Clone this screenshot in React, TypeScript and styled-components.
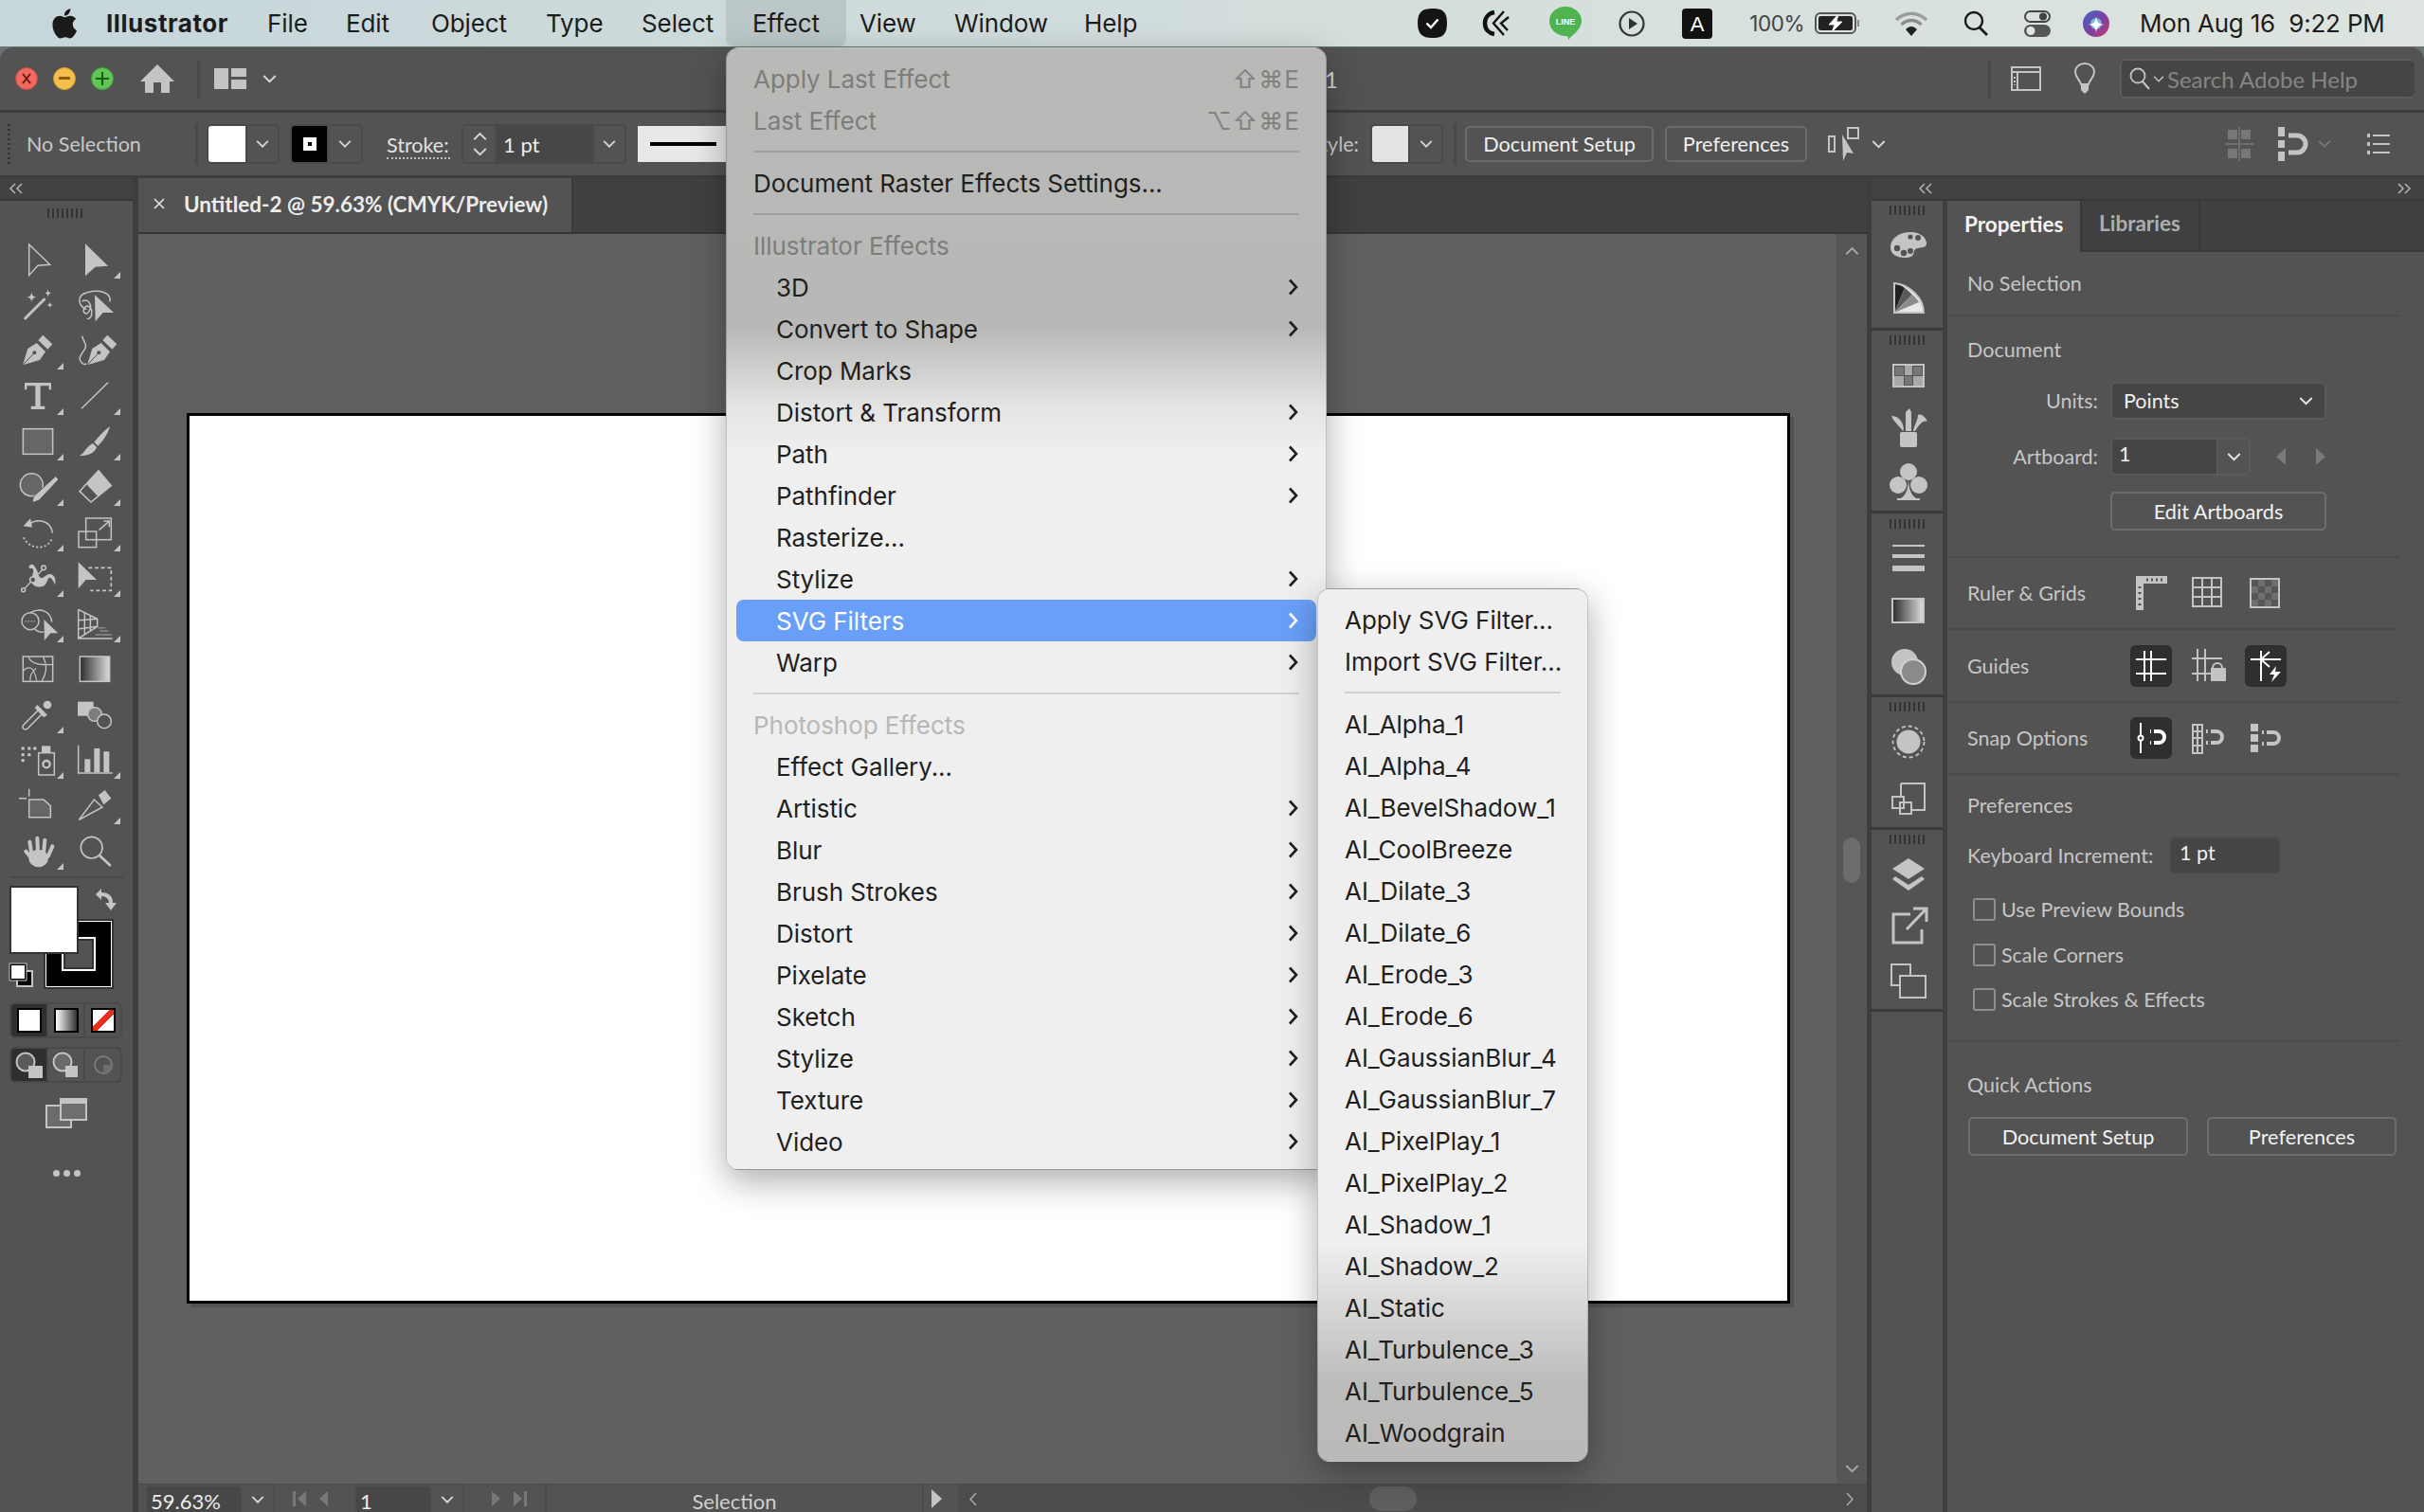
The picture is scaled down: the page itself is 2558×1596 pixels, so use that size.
import React from 'react';
import styled, { createGlobalStyle } from 'styled-components';

const UI = `Lato, "Open Sans", sans-serif`;
const MAC = `Inter, "DejaVu Sans", sans-serif`;
const C = '#c4c4c4';
const BG = '#535353';
const HOLE = '#535353';

const Global = createGlobalStyle`
  html, body { margin: 0; padding: 0; background: #535353; overflow: hidden; }
  * { box-sizing: border-box; }
`;

const Page = styled.div`
  position: relative;
  width: 2558px;
  height: 1596px;
  overflow: hidden;
  display: flex;
  flex-direction: column;
  background: #6b7273;
  font-family: ${UI};
`;

/* ---------- mac menu bar ---------- */
const MacBar = styled.header`
  height: 49px;
  flex: none;
  display: flex;
  background: linear-gradient(90deg, #c6d6da 0%, #d0dcdc 40%, #dde4df 100%);
  color: #1c1c1c;
  font-family: ${MAC};
  font-size: 26px;
`;
const MacNav = styled.nav`
  display: grid;
  grid-template-columns: 55px 57px 170px 83px 90px 121px 101px 89px 127px 114px 137px 100px;
  align-items: stretch;
`;
const MacItem = styled.div<{ $bold?: boolean; $open?: boolean; $pad?: number }>`
  display: flex;
  align-items: center;
  padding-left: ${p => p.$pad ?? 0}px;
  font-weight: ${p => (p.$bold ? 700 : 400)};
  letter-spacing: ${p => (p.$bold ? '0.55px' : '-0.1px')};
  border-radius: 0 0 8px 8px;
  background: ${p => (p.$open ? 'rgba(60,70,70,0.13)' : 'transparent')};
`;
const Tray = styled.div`
  margin-left: auto;
  width: 1081px;
  display: flex;
  align-items: center;
`;
const TrayCell = styled.div<{ $w: number; $end?: boolean }>`
  width: ${p => p.$w}px;
  flex: none;
  display: flex;
  align-items: center;
  justify-content: ${p => (p.$end ? 'flex-end' : 'center')};
`;
const BatteryPct = styled.span`
  font-size: 22.5px;
  color: #444;
  padding-right: 6px;
  letter-spacing: -0.5px;
`;
const Clock = styled.span`
  padding-left: 30px;
  white-space: nowrap;
  font-size: 26px;
  letter-spacing: -0.2px;
`;
const LineText = styled.text`
  font-family: "Liberation Sans", sans-serif;
  font-size: 9px;
  font-weight: 700;
`;
const AText = styled.text`
  font-family: "Liberation Sans", sans-serif;
  font-size: 22px;
`;

/* ---------- app window ---------- */
const AppWindow = styled.div`
  flex: 1;
  margin-top: 1px;
  display: flex;
  flex-direction: column;
  background: ${BG};
  border-radius: 14px 14px 0 0;
  min-height: 0;
`;
const TitleRow = styled.div`
  height: 69px;
  flex: none;
  display: flex;
  align-items: center;
  padding-left: 16px;
  border-bottom: 3px solid #3d3d3d;
`;
const Light = styled.span<{ $c: string; $b: string }>`
  width: 24px;
  height: 24px;
  border-radius: 50%;
  flex: none;
  margin-right: 16px;
  background: ${p => p.$c};
  border: 1px solid ${p => p.$b};
  display: flex;
  align-items: center;
  justify-content: center;
`;
const VRule = styled.span<{ $h: number; $ml: number }>`
  width: 3px;
  height: ${p => p.$h}px;
  margin-left: ${p => p.$ml}px;
  background: #484848;
  flex: none;
`;
const Gap = styled.span<{ $w: number }>`
  width: ${p => p.$w}px;
  flex: none;
  display: flex;
  align-items: center;
`;
const Fill = styled.span`
  flex: 1;
`;
const StrayOne = styled.span`
  font-size: 24px;
  color: #d8d8d8;
  margin-right: 686px;
`;
const SearchBox = styled.div`
  width: 311px;
  height: 42px;
  margin-right: 10px;
  display: flex;
  align-items: center;
  gap: 3px;
  padding-left: 8px;
  background: #454545;
  border: 2px solid #5c5c5c;
  border-right: 0;
  border-radius: 6px;
  color: #858585;
  font-size: 24px;
`;

const ControlRow = styled.div`
  height: 66px;
  flex: none;
  display: flex;
  align-items: center;
  padding: 0 36px 0 8px;
  color: #c8c8c8;
  font-size: 21.5px;
`;
const Grip = styled.span`
  width: 3px;
  height: 42px;
  flex: none;
  background: repeating-linear-gradient(180deg, #333 0 2px, transparent 2px 5px);
`;
const ControlLabel = styled.span<{ $ml?: number; $w?: number }>`
  margin-left: ${p => p.$ml ?? 0}px;
  width: ${p => (p.$w ? `${p.$w}px` : 'auto')};
  flex: none;
  white-space: nowrap;
`;
const DottedLabel = styled.span`
  margin-left: 25px;
  flex: none;
  width: 67px;
  color: #e2e2e2;
  border-bottom: 2px dotted #bdbdbd;
  line-height: 26px;
  margin-top: 4px;
`;
const Field = styled.div<{ $w: number; $ml?: number }>`
  width: ${p => p.$w}px;
  margin-left: ${p => p.$ml ?? 0}px;
  height: 42px;
  flex: none;
  display: flex;
  align-items: stretch;
  border: 2px solid #4a4a4a;
  border-radius: 5px;
  overflow: hidden;
`;
const SwatchPart = styled.span<{ $c: string; $w: number }>`
  width: ${p => p.$w}px;
  flex: none;
  background: ${p => p.$c};
  display: flex;
  align-items: center;
  justify-content: center;
`;
const DropPart = styled.span`
  flex: 1;
  display: flex;
  align-items: center;
  justify-content: center;
  border-left: 2px solid #4a4a4a;
`;
const StepPart = styled.span`
  width: 34px;
  flex: none;
  display: flex;
  flex-direction: column;
  gap: 8px;
  align-items: center;
  justify-content: center;
`;
const FieldValue = styled.span`
  width: 102px;
  flex: none;
  padding-left: 8px;
  display: flex;
  align-items: center;
  background: #474747;
  color: #ededed;
  font-size: 22px;
`;
const StrokePreview = styled.div`
  margin-left: 12px;
  width: 240px;
  height: 38px;
  flex: none;
  background: #e8e8e8;
  display: flex;
  align-items: center;
  padding-left: 13px;
`;
const StrokeLine = styled.span`
  width: 70px;
  height: 4px;
  background: #000;
`;
const ToolButton = styled.button<{ $w: number; $ml?: number; $h?: number }>`
  width: ${p => p.$w}px;
  height: ${p => p.$h ?? 38}px;
  margin-left: ${p => p.$ml ?? 0}px;
  flex: none;
  padding: 0;
  background: transparent;
  border: 2px solid #6a6a6a;
  border-radius: 5px;
  color: #f0f0f0;
  font-family: ${UI};
  font-size: 21.7px;
  text-align: center;
`;

/* ---------- workspace ---------- */
const Workspace = styled.div`
  flex: 1;
  display: flex;
  min-height: 0;
  border-top: 3px solid #3d3d3d;
`;
const ToolRail = styled.aside`
  width: 146px;
  flex: none;
  background: ${BG};
  border-right: 6px solid #3e3e3e;
  display: flex;
  flex-direction: column;
`;
const CollapseBar = styled.div<{ $between?: boolean }>`
  height: 24px;
  flex: none;
  background: #424242;
  border-bottom: 2px solid #383838;
  display: flex;
  align-items: center;
  justify-content: ${p => (p.$between ? 'space-between' : 'flex-start')};
  padding: 0 ${p => (p.$between ? 14 : 10)}px 0 10px;
`;
const CollapseLeft = styled.span`
  padding-left: 40px;
  display: flex;
`;
const GripH = styled.span<{ $w?: number }>`
  display: block;
  width: ${p => p.$w ?? 40}px;
  height: 10px;
  background: repeating-linear-gradient(90deg, #333 0 2px, transparent 2px 5px);
`;
const GripRow = styled.div<{ $h: number }>`
  height: ${p => p.$h}px;
  display: flex;
  align-items: center;
  justify-content: center;
  flex: none;
`;
const ToolGrid = styled.div`
  display: grid;
  grid-template-columns: 60px 60px;
  grid-auto-rows: 48px;
  padding-left: 10px;
  margin-top: 12px;
`;
const Tool = styled.div<{ $fly?: boolean }>`
  position: relative;
  display: flex;
  align-items: center;
  justify-content: center;
  &::after {
    content: '';
    display: ${p => (p.$fly ? 'block' : 'none')};
    position: absolute;
    right: 3px;
    bottom: 4px;
    border-style: solid;
    border-width: 0 0 7px 7px;
    border-color: transparent transparent ${C} transparent;
  }
`;
const RailRule = styled.div`
  height: 2px;
  margin: 3px 10px 8px;
  background: #484848;
  flex: none;
`;
const ColorWell = styled.div`
  position: relative;
  height: 110px;
  flex: none;
`;
const BigFill = styled.div`
  position: absolute;
  left: 10px;
  top: 0;
  width: 73px;
  height: 72px;
  background: #fff;
  border: 2px solid #333;
  z-index: 1;
`;
const BigStroke = styled.div`
  position: absolute;
  left: 47px;
  top: 36px;
  width: 72px;
  height: 72px;
  background: #000;
  border: 2px solid #fff;
  outline: 2px solid #333;
  outline-offset: -1px;
  display: flex;
  align-items: center;
  justify-content: center;
`;
const StrokeHole = styled.div`
  width: 36px;
  height: 36px;
  background: ${BG};
  border: 2px solid #fff;
  outline: 2px solid #333;
  outline-offset: -4px;
`;
const SwapIcon = styled.div`
  position: absolute;
  left: 100px;
  top: 3px;
`;
const DefaultIcon = styled.div`
  position: absolute;
  left: 10px;
  top: 82px;
`;
const ModeStrip = styled.div<{ $mt: number }>`
  width: 119px;
  height: 38px;
  margin: ${p => p.$mt}px 0 0 10px;
  flex: none;
  display: grid;
  grid-template-columns: 1fr 1fr 1fr;
  gap: 2px;
  border: 2px solid #494949;
  border-radius: 6px;
  background: #494949;
  overflow: hidden;
`;
const ModeCell = styled.div<{ $on?: boolean }>`
  background: ${p => (p.$on ? '#2f2f2f' : BG)};
  display: flex;
  align-items: center;
  justify-content: center;
`;
const ModeSwatch = styled.span<{ $bg: string }>`
  width: 26px;
  height: 26px;
  border: 2px solid #000;
  background: ${p => p.$bg};
`;
const ScreenMode = styled.div`
  margin: 16px 0 0 48px;
  flex: none;
`;
const Dots = styled.div`
  margin: 44px 0 0 56px;
  display: flex;
  gap: 4px;
  flex: none;
  span {
    width: 7px;
    height: 7px;
    border-radius: 50%;
    background: ${C};
  }
`;

const Center = styled.main`
  flex: 1;
  min-width: 0;
  display: flex;
  flex-direction: column;
  border-right: 5px solid #3e3e3e;
`;
const TabStrip = styled.div`
  height: 59px;
  flex: none;
  background: #404040;
  display: flex;
  border-bottom: 2px solid #363636;
`;
const DocTab = styled.div`
  width: 459px;
  display: flex;
  align-items: center;
  background: ${BG};
  border-right: 2px solid #3a3a3a;
  padding: 0 0 3px 16px;
  color: #ececec;
  font-size: 22.5px;
  font-weight: 700;
  gap: 20px;
  white-space: nowrap;
`;
const CanvasRow = styled.div`
  flex: 1;
  display: flex;
  min-height: 0;
`;
const Canvas = styled.div`
  flex: 1;
  background: #606060;
  padding: 189px 0 0 51px;
`;
const Artboard = styled.div`
  width: 1692px;
  height: 940px;
  background: #fff;
  border: 3px solid #000;
  box-shadow: 4px 4px 0 rgba(0, 0, 0, 0.14);
`;
const VScroll = styled.div`
  width: 32px;
  flex: none;
  background: #565656;
  display: flex;
  flex-direction: column;
  align-items: center;
  justify-content: space-between;
  padding: 14px 0 12px;
`;
const VThumb = styled.div`
  width: 18px;
  height: 48px;
  border-radius: 9px;
  background: #6c6c6c;
`;
const StatusBar = styled.footer`
  height: 30px;
  flex: none;
  display: flex;
  align-items: flex-start;
  background: ${BG};
  color: #ededed;
  font-size: 22px;
  overflow: hidden;
  border-top: 1px solid #4a4a4a;
`;
const StatusField = styled.div<{ $w: number; $ml: number }>`
  width: ${p => p.$w}px;
  margin-left: ${p => p.$ml}px;
  height: 29px;
  flex: none;
  display: flex;
  background: #474747;
  border: 2px solid #4f4f4f;
  border-bottom: 0;
  border-radius: 5px 5px 0 0;
`;
const StatusValue = styled.span`
  flex: 1;
  padding: 7px 0 0 4px;
  line-height: 18px;
`;
const StatusDrop = styled.span<{ $w: number }>`
  width: ${p => p.$w}px;
  flex: none;
  background: ${BG};
  border-left: 2px solid #4a4a4a;
  display: flex;
  align-items: center;
  justify-content: center;
  height: 28px;
`;
const NavCluster = styled.div<{ $w: number }>`
  width: ${p => p.$w}px;
  height: 30px;
  flex: none;
  display: flex;
  align-items: center;
  justify-content: center;
  gap: 14px;
`;
const StatusLabel = styled.div`
  width: 400px;
  flex: none;
  text-align: center;
  color: #cfcfcf;
  padding-top: 9px;
  line-height: 18px;
  border-left: 2px solid #4a4a4a;
  border-right: 2px solid #4a4a4a;
  height: 29px;
`;
const PlayCell = styled.div`
  width: 18px;
  height: 30px;
  flex: none;
  padding: 5px 0 0 8px;
`;
const HScroll = styled.div`
  flex: 1;
  height: 30px;
  margin-left: 18px;
  background: #4c4c4c;
  display: flex;
  align-items: center;
  padding: 0 14px 0 12px;
`;
const HThumb = styled.div`
  width: 50px;
  height: 26px;
  margin-left: 414px;
  border-radius: 13px;
  background: #5f5f5f;
`;

/* ---------- right dock ---------- */
const RightSide = styled.aside`
  width: 583px;
  flex: none;
  display: flex;
  flex-direction: column;
`;
const RightBody = styled.div`
  flex: 1;
  display: flex;
  min-height: 0;
  background: ${BG};
`;
const DockColumn = styled.div`
  width: 80px;
  flex: none;
  border-right: 5px solid #3e3e3e;
  display: flex;
  flex-direction: column;
`;
const DockGroup = styled.div`
  flex: none;
  display: flex;
  flex-direction: column;
  align-items: center;
  padding-left: 3px;
  border-bottom: 3px solid #3a3a3a;
`;
const DockIcon = styled.div<{ $h: number }>`
  height: ${p => p.$h}px;
  display: flex;
  align-items: center;
  justify-content: center;
  flex: none;
`;
const Panel = styled.section`
  flex: 1;
  min-width: 0;
  color: #c6c6c6;
  font-size: 21.5px;
`;
const PanelTabs = styled.div`
  height: 54px;
  display: flex;
  background: #404040;
`;
const PanelTab = styled.div<{ $on?: boolean; $w: number }>`
  width: ${p => p.$w}px;
  display: flex;
  align-items: center;
  padding: 0 0 5px 18px;
  background: ${p => (p.$on ? BG : 'transparent')};
  color: ${p => (p.$on ? '#f4f4f4' : '#adadad')};
  font-weight: 700;
  font-size: 22.5px;
  border-right: 2px solid #383838;
  border-bottom: ${p => (p.$on ? 'none' : '2px solid #383838')};
`;
const PanelTabRest = styled.div`
  flex: 1;
  border-bottom: 2px solid #383838;
`;
const Section = styled.div<{ $h: number }>`
  display: flow-root;
  width: 477px;
  height: ${p => p.$h}px;
  padding-left: 21px;
  border-bottom: 2px solid #4b4b4b;
  flex: none;
`;
const SectionCenter = styled(Section)`
  display: flex;
  align-items: center;
`;
const SectionTitle = styled.div<{ $mt: number }>`
  margin-top: ${p => p.$mt}px;
  line-height: 26px;
`;
const QuickTitle = styled(SectionTitle)`
  padding-left: 21px;
`;
const FormRow = styled.div<{ $mt: number }>`
  margin-top: ${p => p.$mt}px;
  display: flex;
  align-items: center;
`;
const FormLabel = styled.span`
  width: 138px;
  text-align: right;
  flex: none;
`;
const SelectBox = styled.div`
  width: 228px;
  height: 40px;
  margin-left: 13px;
  display: flex;
  align-items: center;
  justify-content: space-between;
  padding: 0 12px 0 12px;
  background: #454545;
  border: 2px solid #5a5a5a;
  border-radius: 6px;
  color: #f0f0f0;
`;
const ComboBox = styled.div`
  width: 148px;
  height: 40px;
  margin-left: 13px;
  display: flex;
  background: ${BG};
  border: 2px solid #5a5a5a;
  border-radius: 6px;
  overflow: hidden;
  color: #f0f0f0;
`;
const ComboValue = styled.span`
  width: 110px;
  flex: none;
  padding-left: 7px;
  line-height: 30px;
  background: #454545;
`;
const ComboDrop = styled.span`
  flex: 1;
  display: flex;
  align-items: center;
  justify-content: center;
  border-left: 2px solid #5a5a5a;
`;
const PanelButton = styled.button<{ $w: number; $ml: number }>`
  width: ${p => p.$w}px;
  height: 41px;
  margin-left: ${p => p.$ml}px;
  flex: none;
  padding: 0;
  background: transparent;
  border: 2px solid #6e6e6e;
  border-radius: 5px;
  color: #f2f2f2;
  font-family: ${UI};
  font-size: 21.7px;
`;
const IconRowLabel = styled.span<{ $w: number }>`
  width: ${p => p.$w}px;
  flex: none;
`;
const IconBtn = styled.span<{ $on?: boolean; $w?: number }>`
  width: ${p => p.$w ?? 44}px;
  height: 44px;
  flex: none;
  display: flex;
  align-items: center;
  justify-content: center;
  border-radius: 6px;
  background: ${p => (p.$on ? '#2f2f2f' : 'transparent')};
`;
const KeyLabel = styled.span`
  width: 201px;
  flex: none;
  white-space: nowrap;
`;
const IncrementBox = styled.div`
  width: 118px;
  height: 40px;
  margin-left: 12px;
  padding-left: 9px;
  line-height: 30px;
  background: #454545;
  border: 2px solid #4e4e4e;
  border-radius: 6px;
  color: #f0f0f0;
`;
const CheckRow = styled.label<{ $mt: number }>`
  margin: ${p => p.$mt}px 0 0 6px;
  height: 23px;
  display: flex;
  align-items: center;
  gap: 6px;
`;
const CheckBox = styled.span`
  width: 24px;
  height: 24px;
  flex: none;
  border: 2px solid #8f8f8f;
  border-radius: 3px;
`;

/* ---------- open menus ---------- */
const MenuShell = styled.div`
  position: absolute;
  border-radius: 13px;
  border: 1px solid rgba(0, 0, 0, 0.18);
  color: #1f1f1f;
  font-family: ${MAC};
  font-size: 26px;
  letter-spacing: -0.05px;
  box-shadow: 0 12px 36px rgba(0, 0, 0, 0.32);
`;
const MainMenu = styled(MenuShell)`
  left: 766px;
  top: 50px;
  width: 634px;
  height: 1185px;
  padding-top: 10px;
  background: linear-gradient(180deg, #b9b9b7 0%, #b8b8b6 25%, #e4e4e3 32%, #efefef 36%, #efefef 100%);
`;
const SubMenu = styled(MenuShell)`
  left: 1390px;
  top: 621px;
  width: 286px;
  height: 922px;
  padding-top: 10px;
  background: linear-gradient(180deg, #efefef 0%, #efefef 75%, #d2d2d1 84%, #bcbcba 91%, #bbbab8 100%);
`;
const MenuRow = styled.div<{ $tone?: string; $indent?: boolean; $active?: boolean; $pad: number }>`
  height: 44px;
  margin: 0 10px;
  padding: 0 19px 0 ${p => (p.$indent ? p.$pad + 24 : p.$pad)}px;
  display: flex;
  align-items: center;
  justify-content: space-between;
  border-radius: 8px;
  white-space: nowrap;
  color: ${p => (p.$active ? '#fff' : p.$tone ?? 'inherit')};
  background: ${p => (p.$active ? '#6a9ff9' : 'transparent')};
`;
const Shortcut = styled.span`
  color: #818180;
  letter-spacing: 1px;
  margin-right: -2px;
`;
const MenuSep = styled.div`
  height: 2px;
  margin: 10px 28px;
  background: rgba(0, 0, 0, 0.13);
`;

/* ---------- small drawings ---------- */
const Svg = styled.svg`
  display: block;
  flex: none;
  overflow: visible;
`;

const Chevron = ({ c = '#d8d8d8', w = 14, up }: { c?: string; w?: number; up?: boolean }) => (
  <Svg width={w} height={w * 0.55} viewBox="0 0 14 8">
    <path d={up ? 'M1 7L7 1L13 7' : 'M1 1L7 7L13 1'} fill="none" stroke={c} strokeWidth="1.8" />
  </Svg>
);
const SideChevron = ({ c = '#aaa', left }: { c?: string; left?: boolean }) => (
  <Svg width={8} height={15} viewBox="0 0 8 15">
    <path d={left ? 'M7 1L1 7.5L7 14' : 'M1 1L7 7.5L1 14'} fill="none" stroke={c} strokeWidth="1.5" />
  </Svg>
);
const Double = ({ left }: { left?: boolean }) => (
  <Svg width={14} height={12} viewBox="0 0 14 12">
    <path d={left ? 'M6 1L1 6L6 11M13 1L8 6L13 11' : 'M1 1L6 6L1 11M8 1L13 6L8 11'} fill="none" stroke="#b5b5b5" strokeWidth="1.5" />
  </Svg>
);
const SubArrow = ({ c = '#1f1f1f' }: { c?: string }) => (
  <Svg width={11} height={18} viewBox="0 0 11 18">
    <path d="M2 1.5L9 9L2 16.5" fill="none" stroke={c} strokeWidth="2.6" />
  </Svg>
);

const star = (x: number, y: number, r: number) =>
  `M${x} ${y - r}Q${x} ${y} ${x + r} ${y}Q${x} ${y} ${x} ${y + r}Q${x} ${y} ${x - r} ${y}Q${x} ${y} ${x} ${y - r}Z`;

const T = ({ children }: { children: React.ReactNode }) => (
  <Svg width={40} height={40} viewBox="0 0 120 120">
    <g fill="none" stroke={C} strokeWidth="4.5">{children}</g>
  </Svg>
);

const Nib = () => (
  <>
    <path d="M12 106L28 54L56 36L84 64L66 90Z" fill={C} stroke="none" />
    <path d="M12 106L46 70" stroke={HOLE} strokeWidth="3" />
    <circle cx="49" cy="67" r="6" fill={HOLE} stroke="none" />
    <polygon points="76,11 106,40 91,56 61,27" fill={C} stroke="none" />
  </>
);

const tools: { fly?: boolean; art: React.ReactNode }[] = [
  { art: <polygon points="32,12 98,76 60,79 32,110" /> },
  { fly: true, art: <polygon points="30,10 102,80 62,83 30,112" fill={C} stroke="none" /> },
  {
    art: (
      <>
        <path d="M20 102L80 42" strokeWidth="9" strokeLinecap="round" />
        <path d={star(40, 35, 17) + star(92, 22, 14) + star(98, 60, 11)} fill={C} stroke="none" />
      </>
    ),
  },
  {
    art: (
      <>
        <path d="M34 74C6 62 2 28 36 20C72 10 114 18 108 50" />
        <path d="M20 48C40 38 54 60 42 80C34 94 18 84 28 68C36 58 54 66 50 90C48 100 40 106 36 102" />
        <polygon points="60,28 120,84 86,84 62,112" fill={C} stroke="none" />
      </>
    ),
  },
  { fly: true, art: <Nib /> },
  {
    art: (
      <>
        <g transform="translate(24 0)"><Nib /></g>
        <path d="M20 14C24 34 38 40 28 56C14 78 6 86 18 98C24 104 30 104 34 102" />
      </>
    ),
  },
  { fly: true, art: <path d="M18 18H102V40H95V28H68V92H82V102H38V92H52V28H25V40H18Z" fill={C} stroke="none" /> },
  { fly: true, art: <path d="M18 100L102 17" /> },
  { fly: true, art: <rect x="13" y="20" width="94" height="80" fill="#666" /> },
  {
    fly: true,
    art: (
      <>
        <path d="M108 12C102 36 86 58 70 74L58 62C74 42 92 24 108 12Z" fill={C} stroke="none" />
        <path d="M54 66L66 78C60 98 34 108 12 104C28 98 30 78 54 66Z" fill={C} stroke="none" />
      </>
    ),
  },
  {
    fly: true,
    art: (
      <>
        <circle cx="40" cy="53" r="36" fill="#666" />
        <polygon points="116,26 126,36 64,102 42,110 46,90" fill={C} stroke={HOLE} strokeWidth="3" />
      </>
    ),
  },
  {
    fly: true,
    art: (
      <>
        <polygon points="72,8 112,56 48,108 12,74" />
        <polygon points="72,8 112,56 70,90 34,52" fill={C} stroke="none" />
      </>
    ),
  },
  {
    fly: true,
    art: (
      <>
        <path d="M32 34C58 14 102 22 106 62" />
        <polygon points="14,40 36,16 42,44" fill={C} stroke="none" />
        <path d="M16 78C30 110 84 120 102 84" strokeDasharray="1 12" strokeLinecap="round" strokeWidth="6" />
      </>
    ),
  },
  {
    fly: true,
    art: (
      <>
        <rect x="32" y="15" width="80" height="68" />
        <rect x="9" y="57" width="56" height="50" />
        <path d="M74 52L104 26M88 24H106V42" />
      </>
    ),
  },
  {
    fly: true,
    art: (
      <>
        <path d="M38 18C28 22 30 32 40 30C50 30 44 50 40 60C36 78 50 92 70 88C84 88 88 74 92 64C96 54 106 60 114 82C120 60 108 46 96 48C84 50 78 62 70 60C60 58 62 38 52 28C50 22 44 16 38 18Z" fill={C} stroke="none" />
        <path d="M14 98L78 30" strokeWidth="4" />
        <circle cx="14" cy="98" r="6" fill={HOLE} />
        <circle cx="78" cy="28" r="7" fill={HOLE} />
        <circle cx="44" cy="66" r="9" fill={HOLE} />
      </>
    ),
  },
  {
    fly: true,
    art: (
      <>
        <path d="M40 28H112V100H46" strokeDasharray="12 8" strokeWidth="5" />
        <polygon points="8,10 66,66 32,66 8,94" fill={C} stroke="none" />
      </>
    ),
  },
  {
    fly: true,
    art: (
      <>
        <circle cx="36" cy="53" r="27" />
        <path d="M36 26C70 8 102 24 104 56M50 78C62 90 72 88 80 88" />
        <path d="M20 53H52" strokeDasharray="3 6" />
        <polygon points="78,46 126,92 100,92 80,116" fill={C} stroke={HOLE} strokeWidth="2" />
      </>
    ),
  },
  {
    fly: true,
    art: (
      <>
        <path d="M8 16V108H116M8 16L68 46V70L8 108M28 26V94M46 36V82M8 50L68 46M8 78L68 70" />
        <path d="M70 74H94M76 84H104M62 96H114" stroke="#8a8a8a" />
      </>
    ),
  },
  {
    art: (
      <>
        <rect x="13" y="21" width="94" height="79" />
        <path d="M13 66C30 50 48 50 56 98M30 21C36 44 62 50 108 46M76 21C92 50 88 74 72 100M36 98C34 82 40 70 54 58" strokeWidth="3.5" />
      </>
    ),
  },
  {
    art: (
      <>
        <defs>
          <linearGradient id="toolGrad">
            <stop offset="0" stopColor="#2c2c2c" />
            <stop offset="1" stopColor="#dcdcdc" />
          </linearGradient>
        </defs>
        <rect x="13" y="21" width="94" height="79" fill="url(#toolGrad)" />
      </>
    ),
  },
  {
    fly: true,
    art: (
      <>
        <path d="M16 92L66 42L78 54L28 104C18 114 6 102 16 92Z" />
        <path d="M58 30L90 62L78 70L50 40Z" fill={C} stroke="none" />
        <circle cx="90" cy="30" r="13" fill={C} stroke="none" />
      </>
    ),
  },
  {
    art: (
      <>
        <rect x="6" y="20" width="50" height="45" fill={C} stroke="none" />
        <circle cx="60" cy="60" r="22" fill="#7c7c7c" />
        <circle cx="90" cy="82" r="22" fill={HOLE} />
      </>
    ),
  },
  {
    fly: true,
    art: (
      <>
        <path d="M12 24h1M32 24h1M50 24h1M12 44h1M32 44h1M12 62h1" strokeWidth="10" strokeLinecap="round" />
        <rect x="62" y="38" width="50" height="70" />
        <rect x="72" y="16" width="28" height="20" fill={C} stroke="none" />
        <circle cx="87" cy="74" r="11" strokeWidth="7" />
      </>
    ),
  },
  {
    fly: true,
    art: (
      <>
        <path d="M8 14V102H116" />
        <path d="M28 58H46V100H28ZM58 24H76V100H58ZM88 34H106V100H88Z" fill={C} stroke="none" />
      </>
    ),
  },
  {
    art: (
      <>
        <path d="M0 38H24M32 8V32" />
        <path d="M32 42H78L100 62V98H32Z" fill="#666" />
      </>
    ),
  },
  {
    fly: true,
    art: (
      <>
        <path d="M10 106L58 42L84 66Z" />
        <polygon points="72,28 92,12 112,38 88,58" fill={C} stroke="none" />
      </>
    ),
  },
  {
    fly: true,
    art: (
      <>
        <path d="M22 62L40 84M40 70L34 32M60 70L58 20M78 70L82 26M92 78L106 46" strokeWidth="12" strokeLinecap="round" />
        <ellipse cx="62" cy="84" rx="31" ry="28" fill={C} stroke="none" />
      </>
    ),
  },
  {
    art: (
      <>
        <circle cx="50" cy="50" r="34" strokeWidth="5" />
        <path d="M76 76L108 106" strokeWidth="8" strokeLinecap="round" />
      </>
    ),
  },
];

const D = ({ children, s = 48 }: { children: React.ReactNode; s?: number }) => (
  <Svg width={s} height={s} viewBox="0 0 48 48">
    <g fill={C} stroke="none">{children}</g>
  </Svg>
);
const O = { fill: 'none', stroke: C, strokeWidth: 2 };

const dockGroups: { grip: number; items: { h: number; art: React.ReactNode }[] }[] = [
  {
    grip: 20,
    items: [
      {
        h: 52,
        art: (
          <D>
            <path d="M5 27C5 18 14 11 26 11C38 11 43 18 43 23C43 30 32 25 30 31C29 36 28 38 20 38C11 38 5 34 5 27Z" />
            <g fill={HOLE}>
              <circle cx="34" cy="17" r="3" />
              <circle cx="26" cy="16" r="2.6" />
              <circle cx="12" cy="28" r="3.2" />
              <circle cx="19" cy="33" r="3.2" />
              <circle cx="26" cy="31" r="3" />
            </g>
          </D>
        ),
      },
      {
        h: 62,
        art: (
          <D>
            <path d="M9 8C25 9 40 24 40 39H9Z" fill="#e8e8e8" />
            <path d="M9 8L9 39L20 13C16 10 12 9 9 8Z" fill="#222" />
            <path d="M20 13L9 39L28 20C25 17 23 15 20 13Z" fill="#5a5a5a" />
            <path d="M28 20L9 39L35 28C33 25 31 22 28 20Z" fill="#8b8b8b" />
            <path d="M9 8C25 9 40 24 40 39H9Z" {...O} />
          </D>
        ),
      },
    ],
  },
  {
    grip: 20,
    items: [
      {
        h: 54,
        art: (
          <D>
            <rect x="8" y="13" width="32" height="23" {...O} />
            <path d="M10 15H19V24H10ZM29 15H38V24H29ZM20 25H28V34H20Z" fill="#777" />
            <path d="M20 14H28V24H20ZM9 25H19V35H9ZM29 25H39V35H29Z" fill="#a8a8a8" />
          </D>
        ),
      },
      {
        h: 56,
        art: (
          <D>
            <rect x="15" y="29" width="18" height="16" rx="2" />
            <path d="M21 28L21 8L25 4L27 8L27 28Z" />
            <path d="M18 28C14 22 8 18 6 12C12 12 18 16 19 26Z" />
            <path d="M29 28C30 22 34 16 34 11C38 9 42 14 44 18C40 16 36 20 31 28Z" />
          </D>
        ),
      },
      {
        h: 60,
        art: (
          <D>
            <circle cx="24" cy="13" r="9" />
            <circle cx="13" cy="27" r="9" />
            <circle cx="35" cy="27" r="9" />
            <path d="M24 18C24 30 22 37 16 41H32C26 37 24 30 24 18ZM12 41H36V43H12Z" />
          </D>
        ),
      },
    ],
  },
  {
    grip: 21,
    items: [
      {
        h: 52,
        art: (
          <D>
            <rect x="7" y="10" width="34" height="2" />
            <rect x="7" y="20" width="34" height="4" />
            <rect x="7" y="32" width="34" height="6" />
          </D>
        ),
      },
      {
        h: 60,
        art: (
          <D>
            <defs>
              <linearGradient id="dockGrad">
                <stop offset="0" stopColor="#2c2c2c" />
                <stop offset="1" stopColor="#e0e0e0" />
              </linearGradient>
            </defs>
            <rect x="7" y="11" width="33" height="25" fill="url(#dockGrad)" stroke={C} strokeWidth="2" />
          </D>
        ),
      },
      {
        h: 58,
        art: (
          <D>
            <circle cx="20" cy="19" r="14" />
            <circle cx="29" cy="29" r="13" fill="#8a8a8a" stroke="#d0d0d0" strokeWidth="2" />
          </D>
        ),
      },
    ],
  },
  {
    grip: 20,
    items: [
      {
        h: 54,
        art: (
          <D>
            <circle cx="24" cy="24" r="12.5" />
            <circle cx="24" cy="24" r="16.5" fill="none" stroke={C} strokeWidth="1.8" strokeDasharray="4 3" />
          </D>
        ),
      },
      {
        h: 63,
        art: (
          <D>
            <path d="M16 9H41V37H28M16 9V22" {...O} />
            <rect x="7" y="23" width="12" height="12" {...O} />
            <rect x="15" y="29" width="12" height="12" {...O} />
          </D>
        ),
      },
    ],
  },
  {
    grip: 20,
    items: [
      {
        h: 53,
        art: (
          <D>
            <path d="M24 7L41 18L24 29L7 18Z" />
            <path d="M10 26L24 35L38 26L41 29L24 41L7 29Z" />
          </D>
        ),
      },
      {
        h: 56,
        art: (
          <D>
            <path d="M26 12H8V42H38V28" {...O} strokeWidth={3} />
            <path d="M22 28L42 7M29 6H43V20" {...O} strokeWidth={3} />
          </D>
        ),
      },
      {
        h: 60,
        art: (
          <D>
            <rect x="6" y="7" width="20" height="22" {...O} />
            <rect x="15" y="19" width="27" height="23" fill={HOLE} stroke={C} strokeWidth="2" />
          </D>
        ),
      },
    ],
  },
];

const P = ({ children, on }: { children: React.ReactNode; on?: boolean }) => (
  <Svg width={36} height={36} viewBox="0 0 36 36">
    <g fill="none" stroke={on ? '#fff' : C} strokeWidth="2">{children}</g>
  </Svg>
);

const mainMenu = [
  { t: 'Apply Last Effect', tone: '#7d7d7b', sc: '⇧⌘E' },
  { t: 'Last Effect', tone: '#7d7d7b', sc: '⌥⇧⌘E' },
  { sep: true },
  { t: 'Document Raster Effects Settings...' },
  { sep: true },
  { t: 'Illustrator Effects', tone: '#7d7d7b' },
  { t: '3D', i: true, sub: true },
  { t: 'Convert to Shape', i: true, sub: true },
  { t: 'Crop Marks', i: true },
  { t: 'Distort & Transform', i: true, sub: true },
  { t: 'Path', i: true, sub: true },
  { t: 'Pathfinder', i: true, sub: true },
  { t: 'Rasterize...', i: true },
  { t: 'Stylize', i: true, sub: true },
  { t: 'SVG Filters', i: true, sub: true, on: true },
  { t: 'Warp', i: true, sub: true },
  { sep: true },
  { t: 'Photoshop Effects', tone: '#b7b7b7' },
  { t: 'Effect Gallery...', i: true },
  { t: 'Artistic', i: true, sub: true },
  { t: 'Blur', i: true, sub: true },
  { t: 'Brush Strokes', i: true, sub: true },
  { t: 'Distort', i: true, sub: true },
  { t: 'Pixelate', i: true, sub: true },
  { t: 'Sketch', i: true, sub: true },
  { t: 'Stylize', i: true, sub: true },
  { t: 'Texture', i: true, sub: true },
  { t: 'Video', i: true, sub: true },
];

const subMenu = [
  'Apply SVG Filter...',
  'Import SVG Filter...',
  '-',
  'AI_Alpha_1',
  'AI_Alpha_4',
  'AI_BevelShadow_1',
  'AI_CoolBreeze',
  'AI_Dilate_3',
  'AI_Dilate_6',
  'AI_Erode_3',
  'AI_Erode_6',
  'AI_GaussianBlur_4',
  'AI_GaussianBlur_7',
  'AI_PixelPlay_1',
  'AI_PixelPlay_2',
  'AI_Shadow_1',
  'AI_Shadow_2',
  'AI_Static',
  'AI_Turbulence_3',
  'AI_Turbulence_5',
  'AI_Woodgrain',
];

const menuNames = ['File', 'Edit', 'Object', 'Type', 'Select'];

export default function App() {
  return (
    <Page>
      <Global />
      <MacBar>
        <MacNav>
          <span />
          <MacItem>
            <Svg width={26} height={32} viewBox="0 0 814 1000">
              <path
                fill="#1a1a1a"
                d="M788 341c-6 4-106 60-106 186 0 145 127 196 131 197-1 3-20 70-67 138-42 60-86 120-153 120s-84-39-161-39c-75 0-102 40-163 40s-104-56-153-125C60 777 14 652 14 533c0-190 124-291 246-291 65 0 119 43 160 43 39 0 100-45 174-45 28 0 129 3 194 101zM554 160c30-36 52-86 52-136 0-7-1-14-2-19-50 2-109 33-145 75-28 32-54 82-54 133 0 8 1 15 2 18 3 1 8 1 13 1 45 0 101-30 134-72z"
              />
            </Svg>
          </MacItem>
          <MacItem $bold>Illustrator</MacItem>
          {menuNames.map(n => (
            <MacItem key={n}>{n}</MacItem>
          ))}
          <MacItem $open $pad={28}>Effect</MacItem>
          <MacItem $pad={14}>View</MacItem>
          <MacItem>Window</MacItem>
          <MacItem>Help</MacItem>
        </MacNav>
        <Tray>
          <TrayCell $w={68}>
            <Svg width={31} height={31} viewBox="0 0 31 31">
              <path d="M15 0C25 0 31 2 31 15C31 28 26 31 15 31C5 31 0 27 0 15C0 3 6 0 15 0Z" fill="#141414" />
              <path d="M9.5 15.5L14 20L21.5 11.5" fill="none" stroke="#fff" strokeWidth="2.4" />
            </Svg>
          </TrayCell>
          <TrayCell $w={68}>
            <Svg width={30} height={31} viewBox="0 0 30 31">
              <path d="M13 4C7 5 3 9.5 3 15.5C3 22 7 26 13 27" fill="none" stroke="#111" strokeWidth="4.5" />
              <path d="M23 3L12 15.5L23 28M28 9L20 15.5L27 23" fill="none" stroke="#111" strokeWidth="2.4" />
            </Svg>
          </TrayCell>
          <TrayCell $w={78}>
            <Svg width={36} height={35} viewBox="0 0 36 35">
              <path d="M18 0C28 0 35 7 35 15C35 24 26 29 21 35C21 31 20 31 17 31C8 30 1 24 1 15C1 7 8 0 18 0Z" fill="#4fb34f" />
              <LineText x="18" y="18.5" fill="#fff" textAnchor="middle">LINE</LineText>
            </Svg>
          </TrayCell>
          <TrayCell $w={62}>
            <Svg width={28} height={28} viewBox="0 0 28 28">
              <circle cx="14" cy="14" r="12.5" fill="none" stroke="#333" strokeWidth="2.2" />
              <path d="M11 8L20 14L11 20Z" fill="#333" />
            </Svg>
          </TrayCell>
          <TrayCell $w={76}>
            <Svg width={32} height={32} viewBox="0 0 32 32">
              <rect width="32" height="32" rx="4" fill="#111" />
              <AText x="16" y="24" fill="#fff" textAnchor="middle">A</AText>
            </Svg>
          </TrayCell>
          <TrayCell $w={81} $end>
            <BatteryPct>100%</BatteryPct>
          </TrayCell>
          <TrayCell $w={58}>
            <Svg width={48} height={23} viewBox="0 0 48 23">
              <rect x="1" y="1" width="42" height="21" rx="5" fill="none" stroke="#555" strokeWidth="2" />
              <rect x="4" y="4" width="36" height="15" rx="2.5" fill="#222" />
              <path d="M46 8V15" stroke="#888" strokeWidth="2" />
              <path d="M25 2L15 13H21L18 21L29 10H23Z" fill="#fff" stroke="#dfe5e0" strokeWidth="1" />
            </Svg>
          </TrayCell>
          <TrayCell $w={98}>
            <Svg width={36} height={26} viewBox="0 0 36 26">
              <path d="M2 9C12 0 24 0 34 9" fill="none" stroke="#9a9e9b" strokeWidth="3.4" />
              <path d="M7.5 14C14 8 22 8 28.5 14" fill="none" stroke="#8b8f8c" strokeWidth="3.4" />
              <path d="M12 19C16 15 20 15 24 19L18 26Z" fill="#222" />
            </Svg>
          </TrayCell>
          <TrayCell $w={38}>
            <Svg width={26} height={26} viewBox="0 0 26 26">
              <circle cx="11" cy="10" r="9" fill="none" stroke="#1a1a1a" strokeWidth="2.4" />
              <path d="M17 17L25 25" stroke="#1a1a1a" strokeWidth="2.8" />
            </Svg>
          </TrayCell>
          <TrayCell $w={92}>
            <Svg width={28} height={28} viewBox="0 0 28 28">
              <rect x="1" y="1" width="26" height="11" rx="5.5" fill="none" stroke="#444" strokeWidth="2" />
              <circle cx="20" cy="6.5" r="4" fill="#444" />
              <rect x="0" y="15" width="28" height="13" rx="6.5" fill="#555" />
              <circle cx="7" cy="21.5" r="4.5" fill="#dfe5e0" />
            </Svg>
          </TrayCell>
          <TrayCell $w={32}>
            <Svg width={28} height={28} viewBox="0 0 28 28">
              <defs>
                <linearGradient id="siri" x1="0" y1="0" x2="1" y2="1">
                  <stop offset="0" stopColor="#3a6fc0" />
                  <stop offset="0.5" stopColor="#7a3fa8" />
                  <stop offset="1" stopColor="#c23f6a" />
                </linearGradient>
              </defs>
              <circle cx="14" cy="14" r="14" fill="url(#siri)" />
              <circle cx="14" cy="14" r="6" fill="#7fd4ef" opacity="0.8" />
              <path d={star(14, 15, 9)} fill="#fff" />
            </Svg>
          </TrayCell>
          <Clock>Mon Aug 16&nbsp;&nbsp;9:22 PM</Clock>
        </Tray>
      </MacBar>

      <AppWindow>
        <TitleRow>
          <Light $c="#ed6a5e" $b="#c9473d">
            <Svg width={10} height={12} viewBox="0 0 10 12">
              <path d="M1 1L9 11M9 1L1 11" stroke="#6b100b" strokeWidth="1.8" />
            </Svg>
          </Light>
          <Light $c="#f4bf4f" $b="#d19b2c">
            <Svg width={12} height={4} viewBox="0 0 12 4">
              <rect width="12" height="3" fill="#8d5c11" />
            </Svg>
          </Light>
          <Light $c="#61c554" $b="#3fa038">
            <Svg width={14} height={14} viewBox="0 0 14 14">
              <path d="M7 0V14M0 7H14" stroke="#155f12" strokeWidth="2.2" />
            </Svg>
          </Light>
          <Gap $w={12} />
          <Svg width={36} height={30} viewBox="0 0 36 30">
            <path d="M18 0L36 18H31V30H22V19H14V30H5V18H0Z" fill={C} />
          </Svg>
          <VRule $h={40} $ml={24} />
          <Gap $w={15} />
          <Svg width={34} height={22} viewBox="0 0 34 22">
            <path d="M0 0H15V22H0ZM18 0H34V9H18ZM18 12H34V22H18Z" fill={C} />
          </Svg>
          <Gap $w={17} />
          <Chevron w={15} />
          <Fill />
          <StrayOne>1</StrayOne>
          <VRule $h={40} $ml={0} />
          <Gap $w={21} />
          <Svg width={32} height={26} viewBox="0 0 32 26">
            <path d="M1 1H31V25H1ZM1 6H31M7 6V25" fill="none" stroke={C} strokeWidth="2" />
            <path d="M4 11V20" stroke={C} strokeWidth="2" strokeDasharray="2 2" />
          </Svg>
          <Gap $w={34} />
          <Svg width={24} height={34} viewBox="0 0 24 34">
            <path d="M8 23C7 18 2 16 2 10C2 5 6 1 12 1C18 1 22 5 22 10C22 16 17 18 16 23Z" fill="none" stroke={C} strokeWidth="2" />
            <path d="M8 24H16V29L12 33L8 29Z" fill={C} />
          </Svg>
          <Gap $w={25} />
          <SearchBox>
            <Svg width={22} height={24} viewBox="0 0 22 24">
              <circle cx="9" cy="9" r="7.5" fill="none" stroke={C} strokeWidth="1.8" />
              <path d="M14 15L21 23" stroke={C} strokeWidth="2" />
            </Svg>
            <Chevron c={C} w={12} />
            <span>Search Adobe Help</span>
          </SearchBox>
        </TitleRow>

        <ControlRow>
          <Grip />
          <ControlLabel $ml={17} $w={119}>No Selection</ControlLabel>
          <VRule $h={44} $ml={59} />
          <Field $w={77} $ml={9}>
            <SwatchPart $c="#fff" $w={39} />
            <DropPart><Chevron /></DropPart>
          </Field>
          <Field $w={77} $ml={11}>
            <SwatchPart $c="#000" $w={37}>
              <Svg width={14} height={14} viewBox="0 0 14 14">
                <path d="M0 0H14V14H0ZM5 5V9H9V5Z" fill="#fff" fillRule="evenodd" />
              </Svg>
            </SwatchPart>
            <DropPart><Chevron /></DropPart>
          </Field>
          <DottedLabel>Stroke:</DottedLabel>
          <Field $w={174} $ml={12}>
            <StepPart>
              <Chevron up w={15} />
              <Chevron w={15} />
            </StepPart>
            <FieldValue>1 pt</FieldValue>
            <DropPart><Chevron /></DropPart>
          </Field>
          <StrokePreview><StrokeLine /></StrokePreview>
          <Fill />
          <ControlLabel>Style:</ControlLabel>
          <Field $w={77} $ml={12}>
            <SwatchPart $c="#e4e4e4" $w={38} />
            <DropPart><Chevron /></DropPart>
          </Field>
          <VRule $h={44} $ml={11} />
          <ToolButton $w={199} $ml={9}>Document Setup</ToolButton>
          <ToolButton $w={150} $ml={12}>Preferences</ToolButton>
          <Gap $w={22} />
          <Svg width={34} height={36} viewBox="0 0 34 36">
            <path d="M15 8L27 28L20 27L16 36Z" fill={C} />
            <path d="M21 1H32V12H21ZM1 10H7V26H1Z" fill="none" stroke={C} strokeWidth="2" />
          </Svg>
          <Gap $w={12} />
          <Chevron w={15} />
          <Gap $w={358} />
          <Svg width={30} height={36} viewBox="0 0 30 36" opacity="0.5">
            <path d="M3 3H13V13H3ZM17 3H27V13H17ZM3 23H13V33H3ZM17 23H27V33H17Z" fill="#9b9b9b" />
            <path d="M0 18H30M15 0V36" stroke="#8a8a8a" strokeWidth="2" />
          </Svg>
          <Gap $w={26} />
          <Svg width={28} height={36} viewBox="0 0 28 36">
            <path d="M0 0H7V10H0ZM0 14H7V22H0ZM0 26H7V36H0Z" fill={C} />
            <path d="M11 9H20A8 8 0 0 1 20 27H11" fill="none" stroke={C} strokeWidth="5" />
          </Svg>
          <Gap $w={14} />
          <Chevron c="#777" w={14} />
          <Gap $w={38} />
          <Svg width={24} height={24} viewBox="0 0 24 24">
            <path d="M0 1H3V5H0ZM6 2H24V4H6ZM0 10H3V14H0ZM6 11H24V13H6ZM0 19H3V23H0ZM6 20H24V22H6Z" fill={C} />
          </Svg>
        </ControlRow>

        <Workspace>
          <ToolRail>
            <CollapseBar><Double left /></CollapseBar>
            <GripRow $h={26}><GripH /></GripRow>
            <ToolGrid>
              {tools.map((tool, i) => (
                <Tool key={i} $fly={tool.fly}>
                  <T>{tool.art}</T>
                </Tool>
              ))}
            </ToolGrid>
            <RailRule />
            <ColorWell>
              <BigFill />
              <BigStroke>
                <StrokeHole />
              </BigStroke>
              <SwapIcon>
                <Svg width={23} height={23} viewBox="0 0 23 23">
                  <path d="M1 6L7 0V4C15 4 19 8 19 15H23L17 23L11 15H15C15 11 12 8 7 8V12Z" fill={C} />
                </Svg>
              </SwapIcon>
              <DefaultIcon>
                <Svg width={24} height={24} viewBox="0 0 24 24">
                  <rect x="8" y="8" width="16" height="16" fill="#000" stroke={C} strokeWidth="2" />
                  <rect x="1" y="1" width="16" height="16" fill="#fff" stroke="#000" strokeWidth="2" />
                  <rect x="0" y="0" width="18" height="18" fill="none" stroke={C} strokeWidth="1" />
                </Svg>
              </DefaultIcon>
            </ColorWell>
            <ModeStrip $mt={13}>
              <ModeCell $on><ModeSwatch $bg="#fff" /></ModeCell>
              <ModeCell><ModeSwatch $bg="linear-gradient(90deg,#fff,#333)" /></ModeCell>
              <ModeCell>
                <ModeSwatch $bg="linear-gradient(135deg,#fff 0 40%,#e8301f 40% 60%,#fff 60%)" />
              </ModeCell>
            </ModeStrip>
            <ModeStrip $mt={9}>
              <ModeCell $on>
                <Svg width={30} height={28} viewBox="0 0 30 28">
                  <circle cx="11" cy="11" r="9.5" fill="#5a5a5a" stroke={C} strokeWidth="2" />
                  <rect x="14" y="15" width="15" height="13" fill={C} />
                </Svg>
              </ModeCell>
              <ModeCell>
                <Svg width={30} height={28} viewBox="0 0 30 28">
                  <circle cx="11" cy="11" r="9.5" fill="#6a6a6a" stroke={C} strokeWidth="2" />
                  <rect x="14" y="15" width="13" height="12" fill={C} />
                </Svg>
              </ModeCell>
              <ModeCell>
                <Svg width={24} height={24} viewBox="0 0 24 24">
                  <circle cx="12" cy="12" r="9" fill="none" stroke="#7a7a7a" strokeWidth="2" />
                  <path d="M12 12H21A9 9 0 0 1 12 21Z" fill="#6e6e6e" />
                </Svg>
              </ModeCell>
            </ModeStrip>
            <ScreenMode>
              <Svg width={44} height={32} viewBox="0 0 44 32">
                <path d="M1 8H27V31H1Z" fill="#6b6b6b" stroke={C} strokeWidth="2" />
                <path d="M16 1H43V23H16Z" fill="#6e6e6e" stroke={C} strokeWidth="2" />
                <rect x="16" y="0" width="28" height="6" fill={C} />
              </Svg>
            </ScreenMode>
            <Dots><span /><span /><span /></Dots>
          </ToolRail>

          <Center>
            <TabStrip>
              <DocTab>
                <Svg width={12} height={12} viewBox="0 0 12 12">
                  <path d="M1 1L11 11M11 1L1 11" stroke="#e4e4e4" strokeWidth="1.6" />
                </Svg>
                Untitled-2 @ 59.63% (CMYK/Preview)
              </DocTab>
            </TabStrip>
            <CanvasRow>
              <Canvas>
                <Artboard />
              </Canvas>
              <VScroll>
                <Chevron c="#a8a8a8" w={15} up />
                <VThumb />
                <Chevron c="#a8a8a8" w={15} />
              </VScroll>
            </CanvasRow>
            <StatusBar>
              <StatusField $w={137} $ml={7}>
                <StatusValue>59.63%</StatusValue>
                <StatusDrop $w={35}><Chevron /></StatusDrop>
              </StatusField>
              <NavCluster $w={84}>
                <Svg width={48} height={20} viewBox="0 0 48 20">
                  <path d="M1 2H4V18H1ZM15 2V18L6 10ZM38 2V18L29 10Z" fill="#777" />
                </Svg>
              </NavCluster>
              <StatusField $w={116} $ml={0}>
                <StatusValue>1</StatusValue>
                <StatusDrop $w={35}><Chevron /></StatusDrop>
              </StatusField>
              <NavCluster $w={85}>
                <Svg width={48} height={20} viewBox="0 0 48 20">
                  <path d="M10 2V18L19 10ZM33 2V18L42 10ZM44 2H47V18H44Z" fill="#777" />
                </Svg>
              </NavCluster>
              <StatusLabel>Selection</StatusLabel>
              <PlayCell>
                <Svg width={11} height={20} viewBox="0 0 11 20">
                  <path d="M0 0V20L11 10Z" fill={C} />
                </Svg>
              </PlayCell>
              <HScroll>
                <SideChevron left />
                <HThumb />
                <Fill />
                <SideChevron />
              </HScroll>
            </StatusBar>
          </Center>

          <RightSide>
            <CollapseBar $between>
              <CollapseLeft><Double left /></CollapseLeft>
              <Double />
            </CollapseBar>
            <RightBody>
              <DockColumn>
                {dockGroups.map((g, i) => (
                  <DockGroup key={i}>
                    <GripRow $h={g.grip}><GripH /></GripRow>
                    {g.items.map((it, j) => (
                      <DockIcon key={j} $h={it.h}>{it.art}</DockIcon>
                    ))}
                  </DockGroup>
                ))}
              </DockColumn>
              <Panel>
                <PanelTabs>
                  <PanelTab $on $w={142}>Properties</PanelTab>
                  <PanelTab $w={125}>Libraries</PanelTab>
                  <PanelTabRest />
                </PanelTabs>
                <SectionCenter $h={68}>No Selection</SectionCenter>
                <Section $h={255}>
                  <SectionTitle $mt={22}>Document</SectionTitle>
                  <FormRow $mt={21}>
                    <FormLabel>Units:</FormLabel>
                    <SelectBox>Points<Chevron c="#e8e8e8" w={15} /></SelectBox>
                  </FormRow>
                  <FormRow $mt={19}>
                    <FormLabel>Artboard:</FormLabel>
                    <ComboBox>
                      <ComboValue>1</ComboValue>
                      <ComboDrop><Chevron c="#e8e8e8" w={15} /></ComboDrop>
                    </ComboBox>
                    <Gap $w={27} />
                    <Svg width={52} height={18} viewBox="0 0 52 18">
                      <path d="M10 0V18L0 9ZM42 0V18L52 9Z" fill="#7a7a7a" />
                    </Svg>
                  </FormRow>
                  <FormRow $mt={17}>
                    <PanelButton $w={228} $ml={151}>Edit Artboards</PanelButton>
                  </FormRow>
                </Section>
                <SectionCenter $h={76}>
                  <IconRowLabel $w={164}>Ruler &amp; Grids</IconRowLabel>
                  <IconBtn $w={60}>
                    <Svg width={33} height={36} viewBox="0 0 33 36">
                      <path d="M0 0H33V8H8V36H0Z" fill={C} />
                      <path d="M12 2.5V5.5M17 2.5V5.5M22 2.5V5.5M27 2.5V5.5M2.5 12H5.5M2.5 18H5.5M2.5 24H5.5M2.5 30H5.5" stroke={HOLE} strokeWidth="2" />
                    </Svg>
                  </IconBtn>
                  <IconBtn $w={60}>
                    <P>
                      <rect x="2" y="2" width="30" height="30" />
                      <path d="M12 2V32M22 2V32M2 12H32M2 22H32" />
                    </P>
                  </IconBtn>
                  <IconBtn $w={60}>
                    <Svg width={32} height={32} viewBox="0 0 32 32">
                      <rect width="32" height="32" fill="#6f6f6f" />
                      <path d="M2 2H9V9H2ZM16 2H23V9H16ZM9 9H16V16H9ZM23 9H30V16H23ZM2 16H9V23H2ZM16 16H23V23H16ZM9 23H16V30H9ZM23 23H30V30H23Z" fill="#565656" />
                      <rect x="1" y="1" width="30" height="30" fill="none" stroke={C} strokeWidth="2" />
                    </Svg>
                  </IconBtn>
                </SectionCenter>
                <SectionCenter $h={77}>
                  <IconRowLabel $w={172}>Guides</IconRowLabel>
                  <IconBtn $on>
                    <P on>
                      <path d="M11 2V34M18 2V34M2 11H34M2 26H34" />
                    </P>
                  </IconBtn>
                  <Gap $w={17} />
                  <IconBtn>
                    <Svg width={36} height={36} viewBox="0 0 36 36">
                      <path d="M6 0V34M14 0V34M0 10H32M0 26H20" fill="none" stroke={C} strokeWidth="2" />
                      <path d="M22 20A5 5 0 0 1 32 20" fill="none" stroke={C} strokeWidth="2" />
                      <rect x="20" y="20" width="16" height="14" fill={C} />
                    </Svg>
                  </IconBtn>
                  <Gap $w={16} />
                  <IconBtn $on>
                    <P on>
                      <path d="M13 2V34M2 11H34M22 3L13 11L22 19" />
                      <path d="M29 18L22 27H27L24 35L34 24H28Z" fill="#fff" stroke="none" />
                    </P>
                  </IconBtn>
                </SectionCenter>
                <SectionCenter $h={76}>
                  <IconRowLabel $w={172}>Snap Options</IconRowLabel>
                  <IconBtn $on>
                    <P on>
                      <path d="M7 2V34" />
                      <circle cx="7" cy="18" r="2.5" fill="#2f2f2f" />
                      <path d="M17 11H18M17 23H18" strokeWidth="4" />
                      <path d="M21 11H26A6 6 0 0 1 26 23H21" strokeWidth="4" />
                    </P>
                  </IconBtn>
                  <Gap $w={17} />
                  <IconBtn>
                    <P>
                      <path d="M1 4H11V34H1ZM1 11H11M1 18H11M1 26H11M6 4V34" />
                      <path d="M15 11H17M15 23H17" strokeWidth="4" />
                      <path d="M20 11H26A6 6 0 0 1 26 23H20" strokeWidth="4" />
                    </P>
                  </IconBtn>
                  <Gap $w={16} />
                  <IconBtn>
                    <Svg width={32} height={30} viewBox="0 0 32 30">
                      <path d="M0 0H8V8H0ZM0 11H8V19H0ZM0 22H8V30H0Z" fill={C} />
                      <path d="M12 9H14M12 21H14" stroke={C} strokeWidth="4" />
                      <path d="M17 9H24A6 6 0 0 1 24 21H17" fill="none" stroke={C} strokeWidth="4" />
                    </Svg>
                  </IconBtn>
                </SectionCenter>
                <Section $h={282}>
                  <SectionTitle $mt={19}>Preferences</SectionTitle>
                  <FormRow $mt={20}>
                    <KeyLabel>Keyboard Increment:</KeyLabel>
                    <IncrementBox>1 pt</IncrementBox>
                  </FormRow>
                  <CheckRow $mt={25}><CheckBox />Use Preview Bounds</CheckRow>
                  <CheckRow $mt={25}><CheckBox />Scale Corners</CheckRow>
                  <CheckRow $mt={24}><CheckBox />Scale Strokes &amp; Effects</CheckRow>
                </Section>
                <QuickTitle $mt={32}>Quick Actions</QuickTitle>
                <FormRow $mt={21}>
                  <PanelButton $w={232} $ml={22}>Document Setup</PanelButton>
                  <PanelButton $w={200} $ml={20}>Preferences</PanelButton>
                </FormRow>
              </Panel>
            </RightBody>
          </RightSide>
        </Workspace>
      </AppWindow>

      <MainMenu>
        {mainMenu.map((m, i) =>
          m.sep ? (
            <MenuSep key={i} />
          ) : (
            <MenuRow key={i} $pad={18} $indent={m.i} $tone={m.tone} $active={m.on}>
              <span>{m.t}</span>
              {m.sc && <Shortcut>{m.sc}</Shortcut>}
              {m.sub && <SubArrow c={m.on ? '#fff' : undefined} />}
            </MenuRow>
          ),
        )}
      </MainMenu>
      <SubMenu>
        {subMenu.map((t, i) =>
          t === '-' ? (
            <MenuSep key={i} />
          ) : (
            <MenuRow key={i} $pad={18}>{t}</MenuRow>
          ),
        )}
      </SubMenu>
    </Page>
  );
}
